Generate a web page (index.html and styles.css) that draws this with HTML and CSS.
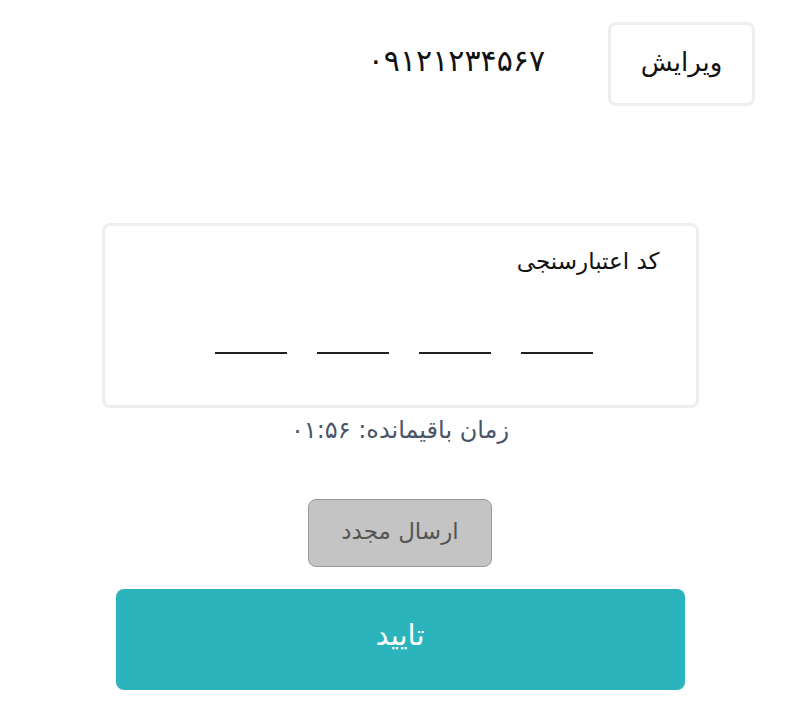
FILE: index.html
```html
<!DOCTYPE html>
<html lang="fa" dir="rtl">
<head>
<meta charset="utf-8">
<link rel="stylesheet" href="styles.css">
</head>
<body>
<div class="page">
  <div class="top-row">
    <button class="edit-btn">ویرایش</button>
    <div class="phone">۰۹۱۲۱۲۳۴۵۶۷</div>
  </div>
  <div class="code-card">
    <div class="code-label">کد اعتبارسنجی</div>
    <div class="code-inputs">
      <span class="digit"></span>
      <span class="digit"></span>
      <span class="digit"></span>
      <span class="digit"></span>
    </div>
  </div>
  <div class="timer">زمان باقیمانده: ۰۱:۵۶</div>
  <div class="resend-row">
    <button class="resend-btn">ارسال مجدد</button>
  </div>
  <button class="confirm-btn">تایید</button>
</div>
</body>
</html>
```

FILE: styles.css
```css
html, body {
  margin: 0;
  padding: 0;
  background: #ffffff;
}
body {
  font-family: "DejaVu Sans", "Noto Sans", sans-serif;
  color: #111;
}
.page {
  width: 800px;
  height: 716px;
  overflow: hidden;
  display: flex;
  flex-direction: column;
  align-items: center;
}
.top-row {
  width: 800px;
  box-sizing: border-box;
  display: flex;
  align-items: center;
  padding: 22px 45px 0 0;
  gap: 63px;
}
.edit-btn {
  width: 147px;
  height: 84px;
  background: #fff;
  border: 3px solid #eeeeee;
  border-radius: 8px;
  font-family: inherit;
  font-size: 26px;
  line-height: 1;
  color: #111;
  padding: 0 0 4px 0;
}
.phone {
  font-size: 30px;
  line-height: 1;
  color: #111;
  letter-spacing: 0.5px;
  padding-bottom: 6px;
}
.code-card {
  margin-top: 117px;
  width: 597px;
  height: 185px;
  box-sizing: border-box;
  border: 3px solid #eeeeee;
  border-radius: 8px;
  padding: 24px 36px 0 0;
  display: flex;
  flex-direction: column;
}
.code-label {
  font-size: 23px;
  line-height: 1;
}
.code-inputs {
  margin-top: 79px;
  display: flex;
  justify-content: center;
  gap: 30px;
  direction: ltr;
  padding-left: 44px;
}
.digit {
  width: 72px;
  height: 2px;
  background: #222;
}
.timer {
  margin-top: 10px;
  font-size: 24px;
  line-height: 1;
  color: #4a5568;
}
.resend-row {
  margin-top: 57px;
}
.resend-btn {
  width: 184px;
  height: 68px;
  background: #c4c4c4;
  border: 1px solid #999;
  border-radius: 8px;
  font-family: inherit;
  font-size: 23px;
  line-height: 1;
  color: #555;
  padding: 0 0 4px 0;
}
.confirm-btn {
  margin-top: 22px;
  width: 569px;
  height: 101px;
  background: #2bb4bc;
  border: none;
  border-radius: 8px;
  font-family: inherit;
  font-size: 29px;
  line-height: 1;
  color: #fff;
  padding: 0 0 8px 0;
}
```
